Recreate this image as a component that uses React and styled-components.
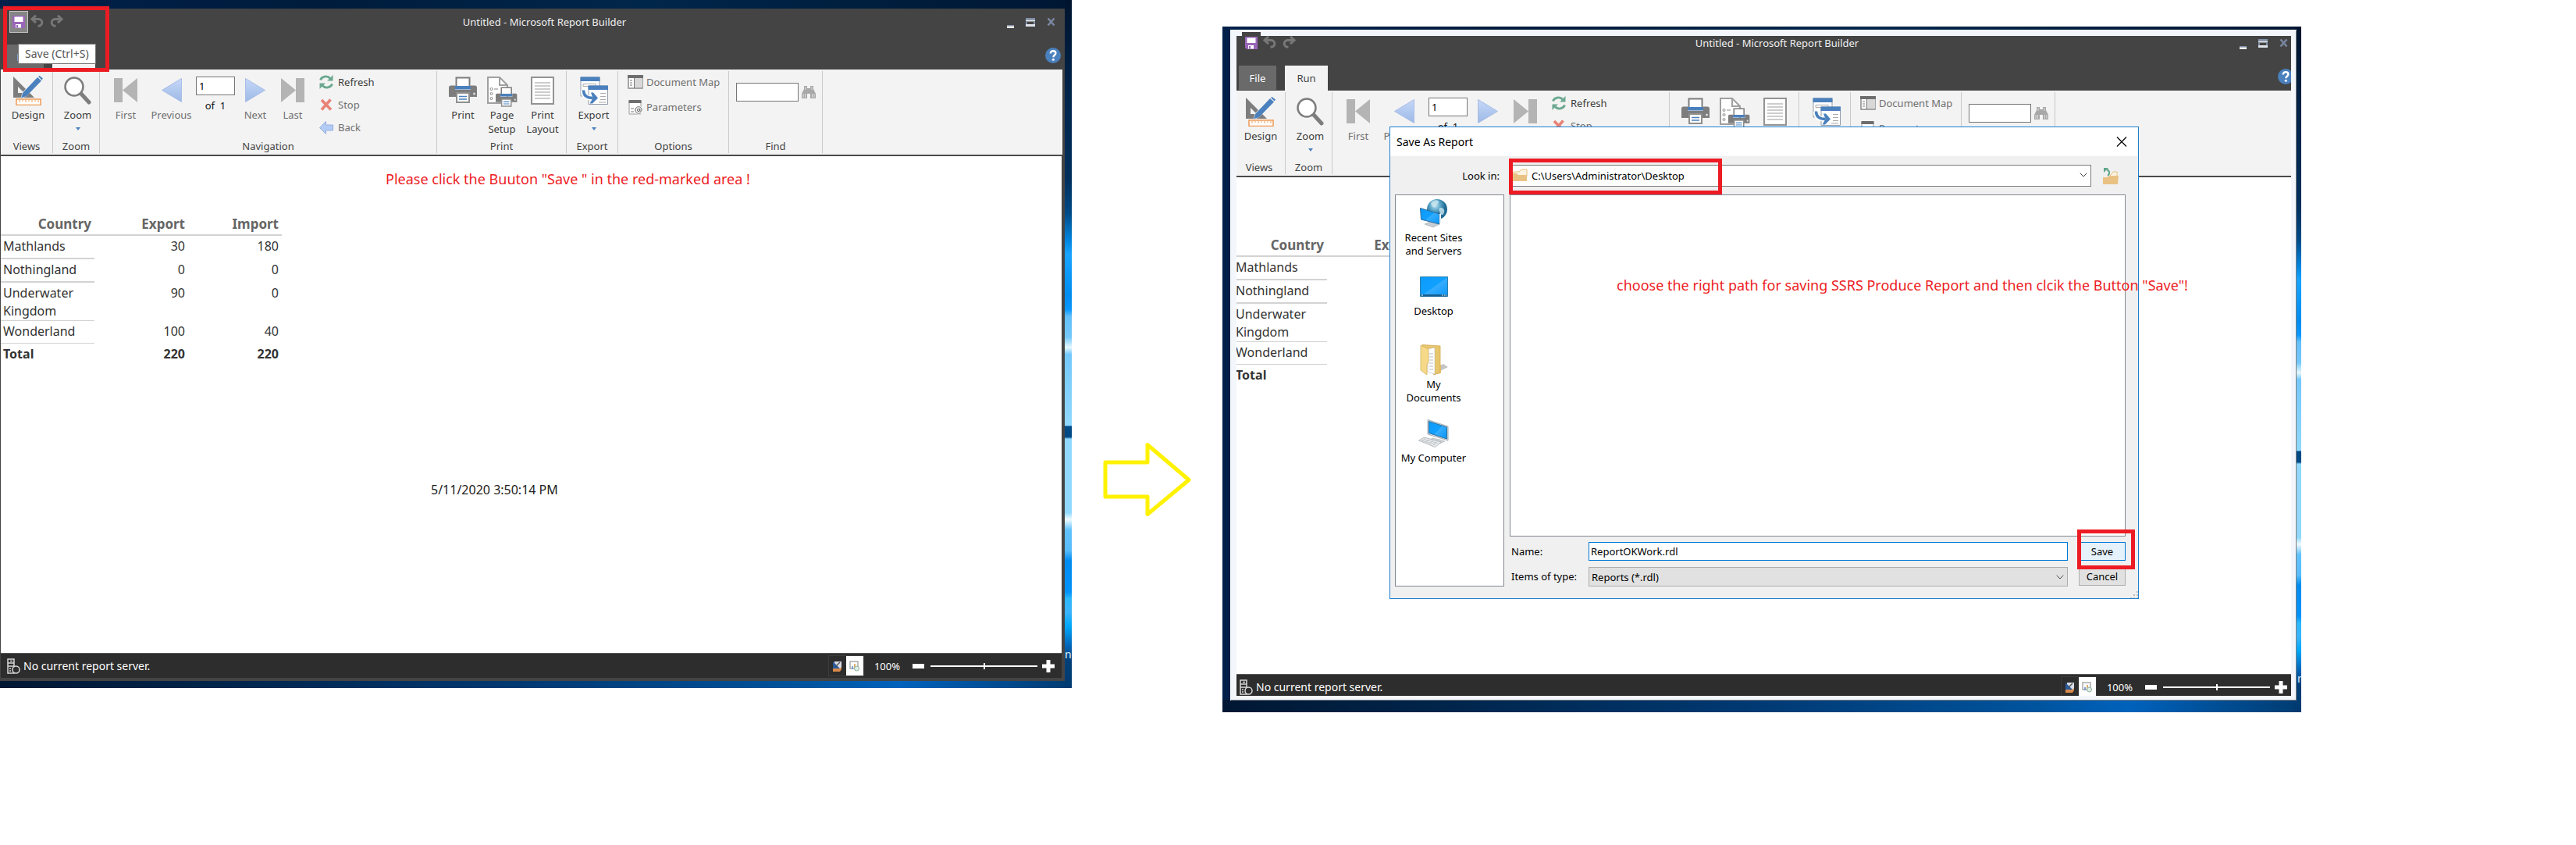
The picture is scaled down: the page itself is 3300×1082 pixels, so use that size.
import React, { useId } from 'react';
import styled, { createGlobalStyle, css } from 'styled-components';

const GlobalStyle = createGlobalStyle`
  *, *::before, *::after { box-sizing: border-box; }
  body { margin: 0; background: #fff; }
  body, button, input, select, table {
    font-family: 'Noto Sans', 'Open Sans', sans-serif;
    font-size: 13px;
    line-height: 18px;
  }
  button { margin: 0; padding: 0; border: 0; background: none; color: inherit; }
  svg { display: block; flex: none; }
`;

const RED = '#ed1c24';

/* ---------- page ---------- */

const Page = styled.main`
  display: grid;
  grid-template-columns: 1373fr 193fr 1382fr 352fr;
  align-items: start;
`;

const Desktop = styled.section`
  position: relative;
  min-width: 0;
  overflow: hidden;
  background:
    linear-gradient(180deg,
      #00142e 0, #00264d 15%, #002f5c 26%, #004a86 31%, #0086e0 35%, #18a4ff 37%, #008cf0 43%,
      #0a98ff 45%, #64c0fb 46%, #74c8fb 49%, #e6f8ff 50.5%, #74c8fb 51.5%, #90d8fd 61.8%,
      #004a86 62%, #004a86 63.5%, #90d8fd 63.8%, #90d8fd 74.5%, #f0fbff 75.5%, #62c2fd 77%,
      #58bcfc 80%, #008cf0 81.5%, #0092fa 86%, #2cb8fc 87%, #3ab4fb 89%, #00a8fa 91%, #0062b4 94%,
      #003f78 96%, #003a70 100%) right top / 9px 100% no-repeat,
    linear-gradient(90deg, #001733 0, #00244a 20%, #003a74 50%, #00539c 75%, #0062bc 84%, #003b70 100%)
      left bottom / 100% 16px no-repeat,
    linear-gradient(90deg, #00204a 0, #001c3c 30%, #00264a 60%, #001733 100%);
`;

const FirstDesktop = styled(Desktop)`
  padding: 11px 9px 9px 0;
`;

const SecondDesktop = styled(Desktop)`
  margin-top: 34px;
  padding: 4px 6px 15px 10px;
`;

const DesktopLabel = styled.span`
  position: absolute;
  right: 0;
  bottom: 34px;
  width: ${(p) => p.$width}px;
  overflow: hidden;
  white-space: nowrap;
  font-size: 14px;
  color: #dfeaf5;
`;

const Between = styled.div`
  display: flex;
  justify-content: center;
  padding-top: 566px;
`;

const Note = styled.p`
  position: absolute;
  z-index: 3;
  left: ${(p) => p.$left}px;
  top: ${(p) => p.$top}px;
  margin: 0;
  font-size: 18px;
  line-height: 24px;
  white-space: nowrap;
  color: ${RED};
`;

const Marker = styled.div`
  position: absolute;
  z-index: 3;
  border: 5px solid ${RED};
  pointer-events: none;
`;

const ToolbarMarker = styled(Marker)`
  left: 4px;
  top: 8px;
  width: 136px;
  height: 84px;
`;

const PathMarker = styled(Marker)`
  left: 0;
  top: -8px;
  width: 273px;
  height: 46px;
`;

const SaveMarker = styled(Marker)`
  inset: -16px -12px -11px -2px;
`;

/* ---------- application window ---------- */

const WindowFrame = styled.div`
  display: flex;
  flex-direction: column;
  background: #444;
  padding-bottom: 4px;
`;

const LightFrame = styled.div`
  position: relative;
  padding: 8px 7px 6px 8px;
  background: #f3f7fc;
  box-shadow: inset 1px 1px 0 #fff, inset -1px -1px 0 #7d8083;
`;

const Clip = styled.div`
  overflow: hidden;

  & > * { margin: -8px -8px -8px -5px; }
`;

const Notch = styled.div`
  position: absolute;
  left: 15px;
  top: 3px;
  width: 24px;
  height: 5px;
  background: #444;
`;

const TitleBar = styled.header`
  display: flex;
  height: 46px;
  padding-top: 3px;
`;

const QuickAccess = styled.div`
  display: flex;
  align-items: flex-start;
  gap: 3px;
  width: 105px;
  padding-left: 12px;
`;

const SaveTool = styled.button`
  padding: ${(p) => (p.$hot ? '5px 3px' : '6px 4px')};
  ${(p) => p.$hot && css`
    border: 1px solid #c4c4c4;
    background: #858585;
  `}
`;

const PlainTool = styled.button`
  padding-top: 5px;

  & + & { margin-left: 3px; }
`;

const WindowTitle = styled.h1`
  flex: 1;
  margin: 0;
  padding-top: 5px;
  font-size: 13px;
  line-height: 18px;
  font-weight: 400;
  text-align: center;
  color: #f0f0f0;
`;

const WindowControls = styled.div`
  display: flex;
  align-items: flex-start;
  gap: 15px;
  width: 74px;
  padding-top: 9px;
`;

const TabBar = styled.nav`
  display: flex;
  align-items: flex-start;
  height: 32px;
  padding-left: 8px;
`;

const Tab = styled.button`
  width: ${(p) => (p.$active ? 55 : 48)}px;
  height: ${(p) => (p.$active ? 32 : 31)}px;
  margin-right: 11px;
  background: ${(p) => (p.$active ? '#f3f3f3' : '#6a6a6a')};
  color: ${(p) => (p.$active ? '#444' : '#fff')};
`;

const HelpButton = styled.button`
  margin: 4px 5px 0 auto;
`;

const Tooltip = styled.div`
  position: absolute;
  z-index: 2;
  left: 23px;
  top: 56px;
  padding: 3px 8px;
  border: 1px solid #767676;
  background: #fff;
  font-size: 14px;
  color: #575757;
`;

const Ribbon = styled.div`
  display: flex;
  height: 111px;
  margin: 0 3px 0 1px;
  padding: 0;
  background: #f3f3f3;
  border-bottom: 2px solid #4a4a4a;
`;

const Group = styled.section`
  position: relative;
  display: flex;
  flex-direction: column;
  justify-content: space-between;
  flex: 0 0 ${(p) => p.$width}px;
  margin: 2px 0;
  border-right: 1px solid #c9c9c9;
`;

const GroupTitle = styled.h2`
  margin: 0;
  font-size: 13px;
  line-height: 18px;
  font-weight: 400;
  text-align: center;
  color: #444;
`;

const Single = styled.div`
  display: flex;
  justify-content: center;
  padding-left: 4px;
`;

const NavigationTools = styled.div`
  display: grid;
  grid-template-columns: 66px 51px 62px 40px 56px 1fr;
`;

const PrintTools = styled.div`
  display: grid;
  grid-template-columns: 50px 50px 54px;
  padding-left: 8px;
`;

const BigTool = styled.button`
  display: flex;
  flex-direction: column;
  align-items: center;
  align-self: start;
  padding-top: 6px;
  color: ${(p) => (p.$muted ? '#707070' : '#3c3c3c')};
`;

const IconSlot = styled.span`
  display: flex;
  align-items: flex-start;
  justify-content: center;
  height: 41px;
  min-width: 36px;
`;

const Drop = styled.span`
  margin-top: 7px;
  border: 3px solid transparent;
  border-top: 4px solid #4a80bd;
`;

const PageBox = styled.label`
  display: flex;
  flex-direction: column;
  align-items: center;
  gap: 4px;
  padding-top: 7px;
  white-space: pre;
  color: #111;
`;

const TextBox = styled.input`
  width: ${(p) => p.$width}px;
  height: 24px;
  padding: 0 3px;
  border: 1px solid #767676;
  background: #fff;
  color: #000;
`;

const ToolList = styled.div`
  display: flex;
  flex-direction: column;
  align-items: flex-start;
  gap: ${(p) => p.$gap}px;
  padding: 5px 0 0 ${(p) => p.$indent}px;
`;

const SmallTool = styled.button`
  display: flex;
  align-items: center;
  gap: ${(p) => p.$gap}px;
  height: 18px;
  color: ${(p) => (p.$muted ? '#707070' : '#3c3c3c')};
`;

const FindTools = styled.div`
  display: flex;
  align-items: center;
  gap: 3px;
  padding: 15px 0 0 9px;
`;

/* ---------- report ---------- */

const ReportCanvas = styled.div`
  min-height: 636px;
  margin: 0 4px 0 1px;
  padding-top: 73px;
  background: #fff;
`;

const ReportTable = styled.table`
  border-spacing: 0;
  table-layout: fixed;
  width: 360px;
  font-size: 16px;
  line-height: 23px;
  color: #333;
`;

const HeadCell = styled.th`
  padding: 0 4px;
  border-bottom: 2px solid #d3d3d3;
  font-size: 17px;
  line-height: 27px;
  text-align: right;
  color: #666;
`;

const NameCell = styled.th`
  height: ${(p) => 28 + p.$rule}px;
  padding: 2px 3px 0;
  border-bottom: ${(p) => p.$rule}px solid #d3d3d3;
  font-weight: ${(p) => (p.$total ? 700 : 400)};
  text-align: left;
  vertical-align: top;
`;

const ValueCell = styled.td`
  padding: 2px 4px 0;
  font-weight: ${(p) => (p.$total ? 700 : 400)};
  text-align: right;
  vertical-align: top;
`;

const Timestamp = styled.p`
  margin: 147px 0 0 551px;
  font-size: 16px;
  line-height: 24px;
  color: #222;
`;

const StatusBar = styled.footer`
  display: flex;
  align-items: center;
  height: 32px;
  margin: 0 4px 0 1px;
  padding: 0 9px 0 8px;
  border-top: 1px solid #5a5a5a;
  background: #2d2d2d;
  color: #fff;
`;

const StatusText = styled.span`
  flex: 1;
  padding-left: 4px;
  font-size: 14px;
`;

const ViewSwitch = styled.div`
  display: flex;
  margin-right: 13px;
  border: 1px solid #3c3c3c;
`;

const ViewButton = styled.button`
  display: flex;
  align-items: center;
  justify-content: center;
  width: 22px;
  height: 25px;
  background: ${(p) => (p.$active ? '#fff' : 'transparent')};
`;

const ZoomSlider = styled.input`
  appearance: none;
  width: 137px;
  height: 8px;
  margin: 0 6px 0 8px;
  background: linear-gradient(#fff, #fff) center / 100% 2px no-repeat;

  &::-webkit-slider-thumb {
    appearance: none;
    width: 2px;
    height: 8px;
    background: #fff;
  }
`;

const ZoomOut = styled.button`
  margin-left: 16px;
`;

/* ---------- dialog ---------- */

const Dialog = styled.div`
  position: absolute;
  z-index: 2;
  left: 214px;
  right: 208px;
  top: 128px;
  padding-bottom: 15px;
  border: 1px solid #1c7fd0;
  background: #f0f0f0;
  color: #000;
`;

const DialogHeader = styled.header`
  display: flex;
  align-items: center;
  justify-content: space-between;
  height: 37px;
  padding: 0 14px 0 8px;
  background: #fff;
`;

const DialogTitle = styled.h2`
  margin: 0;
  font-size: 14px;
  line-height: 18px;
  font-weight: 400;
`;

const LookInRow = styled.div`
  display: flex;
  align-items: center;
  padding: 11px 25px 10px 0;
`;

const LookInLabel = styled.label`
  width: 152px;
  padding-right: 12px;
  text-align: right;
`;

const SelectWrap = styled.div`
  position: relative;
  flex: 1;
  display: flex;

  & > svg { position: absolute; }
`;

const FolderMark = styled.svg`
  left: 5px;
  top: 5px;
`;

const ChevronMark = styled.svg`
  right: 5px;
  top: 10px;
`;

const Select = styled.select`
  appearance: none;
  flex: 1;
  height: ${(p) => (p.$path ? 28 : 25)}px;
  padding: 0 24px 0 ${(p) => (p.$path ? 28 : 3)}px;
  border: 1px solid ${(p) => (p.$path ? '#7a7a7a' : '#adadad')};
  border-radius: 0;
  background: ${(p) => (p.$path ? '#fff' : '#e1e1e1')};
  color: #000;
`;

const UpButton = styled.button`
  margin-left: 15px;
`;

const DialogBody = styled.div`
  display: flex;
  gap: 7px;
  padding: 0 16px 0 6px;
`;

const Places = styled.nav`
  width: 140px;
  border: 1px solid #828790;
  background: #fff;
`;

const Place = styled.button`
  display: flex;
  flex-direction: column;
  align-items: center;
  gap: 3px;
  width: 97px;
  height: 94px;
  padding-top: 3px;
  line-height: 17px;
`;

const PlaceIcon = styled.span`
  display: flex;
  align-items: center;
  justify-content: center;
  height: 40px;
`;

const PlaceName = styled.span`
  max-width: ${(p) => (p.$narrow ? 74 : 90)}px;
  text-align: center;
`;

const DialogMain = styled.div`
  flex: 1;
  display: flex;
  flex-direction: column;
`;

const FileList = styled.div`
  height: 438px;
  border: 1px solid #828790;
  background: #fff;
`;

const Form = styled.form`
  display: grid;
  grid-template-columns: 101px 1fr 60px;
  row-gap: 8px;
  align-items: start;
  margin-top: 7px;
`;

const FieldLabel = styled.label`
  padding: 3px 0 0 2px;
`;

const NameInput = styled.input`
  height: 24px;
  padding: 0 2px;
  border: 1px solid #0078d7;
  background: #fff;
  color: #000;
`;

const ButtonCell = styled.div`
  position: relative;
  display: flex;
`;

const DialogButton = styled.button`
  flex: 1;
  height: 24px;
  border: 1px solid ${(p) => (p.$primary ? '#0078d7' : '#adadad')};
  background: ${(p) => (p.$primary ? '#e5f1fb' : '#e1e1e1')};
`;

const FieldSlot = styled.div`
  display: flex;
  margin-right: 14px;

  & > * { flex: 1; min-width: 0; }
`;

const Grip = styled.svg`
  position: absolute;
  right: 0;
  bottom: 0;
`;

/* ---------- icons ---------- */

const GREY = '#7d7d7d';
const BLUE = '#4a80bd';

const SaveIcon = () => (
  <svg width="16" height="16" viewBox="0 0 16 16">
    <path d="M0 0h16v16H2l-2-2z" fill="#9a66b9" />
    <path d="M2.500 1.500h11V8h-11zM4 11h7v4.500H4z" fill="#fff" />
    <path d="M5 12h2v3.500H5z" fill="#9a66b9" />
  </svg>
);

const UndoIcon = ({ redo }) => (
  <svg width="18" height="17" viewBox="0 0 18 17">
    <g transform={redo ? 'translate(18 0) scale(-1 1)' : undefined} fill="none" stroke="#777" strokeWidth="3">
      <path d="M2 5.500h8.500a4.300 4.300 0 0 1 0 8.700H9.500" />
      <path d="M7 0.800L2 5.500l5 4.700" />
    </g>
  </svg>
);

const MinimizeIcon = () => (
  <svg width="9" height="13" viewBox="0 0 9 13"><path d="M0 9h9v1.500H0z" fill="#8090ab" /><path d="M0 10.500h9V13H0z" fill="#fff" /></svg>
);
const RestoreIcon = () => (
  <svg width="12" height="11" viewBox="0 0 12 11">
    <path d="M0 0h12v2.500H0z" fill="#8090ab" />
    <path d="M0 2.500h12v2H0zM0 8h12v3H0z" fill="#dfe3ea" />
    <path d="M0 4.500h2V8H0zM10 4.500h2V8h-2z" fill="#8090ab" />
  </svg>
);
const CloseIcon = () => (
  <svg width="11" height="10" viewBox="0 0 11 10"><path d="M1.500 0.500l8 9M9.500 0.500l-8 9" stroke="#7986a0" strokeWidth="2.500" /></svg>
);

const HelpIcon = () => (
  <svg width="20" height="20" viewBox="0 0 20 20">
    <circle cx="10" cy="10" r="10" fill={BLUE} />
    <path d="M6.800 7.400C6.800 5.400 8 4.300 10 4.300s3.400 1.100 3.400 2.900c0 2.200-3 2.400-3 5" fill="none" stroke="#fff" strokeWidth="2.400" />
    <circle cx="10.300" cy="15.300" r="1.500" fill="#fff" />
  </svg>
);

const DesignIcon = () => (
  <svg width="40" height="38" viewBox="0 0 40 38">
    <path d="M1 1v27h27z" fill={GREY} />
    <path d="M7 14v8h8z" fill="#f3f3f3" />
    <path d="M10 30l3-9L33 0.500 38.500 5 18 26z" fill="#f3f3f3" />
    <path d="M11 28.500l2.500-7L32 2l5 4.500-19 19.500z" fill={BLUE} />
    <path d="M33 1l1.500-1L39 3.500 37.500 5.500z" fill={BLUE} />
    <path d="M5 30h31v7.500H5z" fill="#fff" stroke="#ee9a55" strokeWidth="1.500" />
    <path d="M9 31v3M13 31v2M17 31v3M21 31v2M25 31v3M29 31v2M33 31v3" stroke="#ee9a55" />
  </svg>
);

const ZoomIcon = () => (
  <svg width="35" height="37" viewBox="0 0 35 37">
    <path d="M21 22l11 12" stroke={GREY} strokeWidth="5" strokeLinecap="round" />
    <circle cx="13" cy="14" r="11.500" fill="#fff" stroke={GREY} strokeWidth="2.500" />
  </svg>
);

const EdgeIcon = ({ last }) => (
  <svg width="30" height="36" viewBox="0 0 30 36">
    <g transform={last ? 'translate(30 0) scale(-1 1)' : undefined} fill="#b4b4b4">
      <path d="M0 3h11v31H0z" /><path d="M30 3v31L11 18.500z" />
    </g>
  </svg>
);

const StepIcon = ({ next }) => {
  const id = useId();
  return (
    <svg width="26" height="36" viewBox="0 0 26 36">
      <defs><linearGradient id={id} x1="0" y1="0" x2="0" y2="1"><stop offset="0" stopColor="#c6d8f8" /><stop offset="1" stopColor="#9db9e6" /></linearGradient></defs>
      <path d="M25.500 3.500v30L0.500 18.500z" transform={next ? 'translate(26 0) scale(-1 1)' : undefined} fill={`url(#${id})`} stroke="#a9bde6" />
    </svg>
  );
};

const RefreshIcon = () => (
  <svg width="18" height="18" viewBox="0 0 18 18" fill="none" stroke="#6aa890" strokeWidth="2.800">
    <path d="M1.500 6.500C3 2 10 0 14 4.500M16.500 11.500C15 16 8 18 4 13.500" />
    <path d="M17.500 0v7.500H10l2.700-2.500M0.500 18v-7.500H8L5.300 13" fill="#6aa890" stroke="none" />
  </svg>
);
const StopIcon = () => (
  <svg width="18" height="18" viewBox="0 0 18 18"><path d="M3 3l12 12.500M14.500 2.500L3 15.500" stroke="#e98377" strokeWidth="3.600" /></svg>
);
const BackIcon = () => (
  <svg width="18" height="18" viewBox="0 0 18 18"><path d="M0.500 9.500L8.500 1.500v4.500h9v7h-9v4.500z" fill="#b3ccf5" stroke="#93aedd" /></svg>
);

const PrinterShape = () => (
  <>
    <path d="M9.500 1.500h17V13h-17z" fill="#fff" stroke={GREY} strokeWidth="2" />
    <path d="M0 14c0-1.500 1-2.500 2.500-2.500H8V17h20v-5.500h5.500c1.500 0 2.500 1 2.500 2.500v12H0z" fill={GREY} />
    <path d="M8 12h20v4.500H8z" fill={BLUE} />
    <path d="M10 21h16v12H10z" fill="#fff" stroke="#8f8f8f" strokeWidth="2" />
    <path d="M13 25.500h10M13 29h10" stroke={BLUE} strokeWidth="1.500" />
    <circle cx="32.500" cy="22" r="1.500" fill="#ddd" />
  </>
);
const PrintIcon = () => (
  <svg width="36" height="36" viewBox="0 -1 36 36"><PrinterShape /></svg>
);
const PageSetupIcon = () => (
  <svg width="40" height="40" viewBox="0 0 40 40">
    <path d="M2 2h15l10 10v23H2z" fill="#fff" stroke="#a0a0a0" strokeWidth="2" />
    <path d="M17 2v10h10" fill="none" stroke="#a0a0a0" strokeWidth="2" />
    <g fill="none" stroke="#888"><circle cx="6.500" cy="17" r="1.500" /><circle cx="6.500" cy="23" r="1.500" /><circle cx="6.500" cy="29" r="1.500" /><path d="M10 17h5" /></g>
    <g transform="translate(12 14) scale(.76)"><PrinterShape /></g>
  </svg>
);
const PrintLayoutIcon = () => (
  <svg width="30" height="37" viewBox="0 0 30 37">
    <path d="M1 2h28v34H1z" fill="#fff" stroke="#939393" strokeWidth="2" />
    <path d="M5 9h20M5 13h20M5 17h20M5 21h20M5 25h20M5 29h20" stroke="#9a9a9a" />
  </svg>
);
const ExportIcon = () => (
  <svg width="36" height="38" viewBox="0 0 36 38">
    <path d="M1 2h24v24H1z" fill="#fff" stroke="#8f9aa8" />
    <path d="M0.500 1.500h25V7h-25z" fill={BLUE} />
    <path d="M4 10.500h16v3H4z" fill="none" stroke="#aaa" />
    <path d="M11 13h24.500v23.500H11z" fill="#fff" stroke="#8f9aa8" />
    <path d="M10.500 12.500H36V18H10.500z" fill={BLUE} />
    <path d="M26 22.500h7M26 26.500h7M26 30.500h7M24 34h9" stroke="#aaa" />
    <path d="M4 19c0 7 4 9.500 11 9.500" fill="none" stroke="#fff" strokeWidth="6" />
    <path d="M4.500 18.500c0 7 4 10 12 10" fill="none" stroke={BLUE} strokeWidth="3.500" />
    <path d="M14 21.500h3l6 7-7 7h-3.500l4-7z" fill={BLUE} />
  </svg>
);
const DocMapIcon = () => (
  <svg width="20" height="18" viewBox="0 0 20 18">
    <path d="M1 1h18v16H1z" fill="#fff" stroke="#8b8b8b" strokeWidth="1.500" />
    <path d="M0 0h20v4H0z" fill="#6e6e6e" /><path d="M9 4h10v12H9z" fill="#d8d8d8" /><path d="M8.500 4v13M3 7h3M3 10h3M3 13h3" stroke="#777" />
  </svg>
);
const ParametersIcon = () => (
  <svg width="20" height="19" viewBox="0 0 20 19">
    <path d="M2 1h15v17H2z" fill="#fff" stroke="#999" />
    <path d="M1.500 0h16v4h-16z" fill="#6e6e6e" /><path d="M4 11h4M4 15h4" stroke="#777" />
    <circle cx="14" cy="13" r="5.500" fill="#f3f3f3" /><circle cx="14" cy="13" r="1.600" fill="none" stroke="#666" />
    <path d="M15.800 11v3c.3 1.500 2.200.6 2.200-1.200 0-5.500-8-5.500-8 .2 0 4 4 5 6.500 3.600" fill="none" stroke="#666" />
  </svg>
);
const FindIcon = () => (
  <svg width="20" height="18" viewBox="0 0 20 18" fill="#a8a8a8">
    <path d="M4 1h4v3h4V1h4v4l3 6v6h-7v-6H8v6H1v-6l3-6z" />
    <path d="M3 11v5M5.500 11v5M14.500 11v5M17 11v5M6 2v4M14 2v4" stroke="#e0e0e0" />
  </svg>
);

const ServerIcon = () => (
  <svg width="17" height="20" viewBox="0 0 17 20" fill="none" stroke="#d8d8d8" strokeWidth="1.500">
    <path d="M1 1h8v18H1zM1 6h8M1 10h8" /><path d="M4 3.500h3M3 13h2M3 16h2" />
    <circle cx="11.500" cy="14.500" r="4.500" fill="#2d2d2d" />
  </svg>
);
const DesignViewIcon = () => (
  <svg width="12" height="14" viewBox="0 0 12 14">
    <path d="M2 1h9v9H2z" fill="#d8dde6" /><path d="M0 1v9h9z" fill="#2c5a99" /><path d="M4 7l5-5" stroke="#555" strokeWidth="1.500" /><path d="M0 10h9l2-2v3l-2 3H0z" fill="#d98a4a" />
  </svg>
);
const RunViewIcon = () => (
  <svg width="13" height="14" viewBox="0 0 13 14">
    <path d="M1 1h10v9H1z" fill="#fdfdfd" stroke="#aaa" strokeWidth="1.500" /><path d="M3 7h2v4H3z" fill="#7d9fd0" /><path d="M6 4h2v6H6z" fill="#e0b070" />
    <circle cx="9.500" cy="10" r="3" fill="#dfeee6" stroke="#8ab09c" />
  </svg>
);
const MinusIcon = () => (
  <svg width="15" height="6" viewBox="0 0 15 6"><path d="M0 0h15v6H0z" fill="#fff" /></svg>
);
const PlusIcon = () => (
  <svg width="16" height="16" viewBox="0 0 16 16"><path d="M5.500 0h5v5.500H16v5h-5.500V16h-5v-5.500H0v-5h5.500z" fill="#fff" /></svg>
);

const FolderShape = () => (
  <>
    <path d="M1 4h7l3-3h7v9H1z" fill="#fbf3e3" stroke="#e8c07c" />
    <path d="M0 16V6h5l2 2h11v8z" fill="#e9c283" />
  </>
);
const UpFolderIcon = () => (
  <svg width="20" height="21" viewBox="0 0 20 21">
    <path d="M9 10l4-5h5v6" fill="#fbf3e3" stroke="#e8c07c" />
    <path d="M0 21v-9h5l4-2h11l-1 11z" fill="#e9c283" />
    <path d="M6 10c3-2 3-6-1-8" fill="none" stroke="#5fa58a" strokeWidth="2" /><path d="M1 0h6L1 6z" fill="#5fa58a" />
  </svg>
);
const DialogCloseIcon = () => (
  <svg width="14" height="13" viewBox="0 0 14 13"><path d="M1 0.500l12 12M13 0.500l-12 12" stroke="#000" strokeWidth="1.200" /></svg>
);

const Blue = ({ id }) => (
  <linearGradient id={id} x1="0" y1="0" x2="1" y2="1"><stop offset="0" stopColor="#0c9bfb" /><stop offset=".5" stopColor="#12a0ff" /><stop offset=".52" stopColor="#35adff" /><stop offset="1" stopColor="#0b97f8" /></linearGradient>
);
const RecentIcon = () => {
  const id = useId();
  return (
    <svg width="36" height="38" viewBox="0 0 36 38">
      <defs><Blue id={id} /><radialGradient id={id + 'g'} cx=".4" cy=".3"><stop offset="0" stopColor="#cfeaf5" /><stop offset=".5" stopColor="#5fa9cb" /><stop offset="1" stopColor="#1f6b94" /></radialGradient></defs>
      <circle cx="22" cy="14" r="13" fill={`url(#${id}g)`} />
      <path d="M14 6c4-5 9-4 10-2s-3 3-4 6-5 1-6-4zM26 12c4 0 6 2 5 6s-4 4-5 1-3-6 0-7z" fill="#c9e6ee" opacity=".8" />
      <path d="M6 33l7-3 12 3-8 4z" fill="#c8ced3" stroke="#9aa2a8" strokeWidth=".6" />
      <path d="M0.500 12.500L25 20v13L1.500 27z" fill={`url(#${id})`} stroke="#2b6c9b" />
      <path d="M25 20l2-1v12l-2 2z" fill="#e8eef2" />
    </svg>
  );
};
const DesktopIcon = () => {
  const id = useId();
  return (
    <svg width="36" height="26" viewBox="0 0 36 26">
      <defs><Blue id={id} /></defs>
      <path d="M0.500 0.500h35v25h-35z" fill={`url(#${id})`} stroke="#2a7fae" />
      <path d="M1 23h34v2.500H1z" fill="#17608f" /><path d="M2 24h2M28 24h1.500M31 24h1.500M33.500 24h1" stroke="#fff" />
    </svg>
  );
};
const DocumentsIcon = () => (
  <svg width="36" height="40" viewBox="0 0 36 40">
    <path d="M22 36l14-7-6-4-8 4z" fill="#c4c4c4" /><path d="M22 24l5 2v11l-5 1z" fill="#e9cd7a" />
    <path d="M3 0.500L26 2v34l-8 3z" fill="#e8c66d" stroke="#d1aa4d" strokeWidth=".8" />
    <path d="M10 6l9-2v34l-9-3z" fill="#fff" stroke="#bbb" strokeWidth=".6" />
    <path d="M12 12h5M12 16h5M12 20h5M12 24h5M12 28h5M12 32h5" stroke="#b9bcc0" />
    <path d="M1 1l10 5v17l-2 3v13L1 33z" fill="#f6d989" stroke="#d6b158" strokeWidth=".8" />
  </svg>
);
const ComputerIcon = () => {
  const id = useId();
  return (
    <svg width="40" height="36" viewBox="0 0 40 36">
      <defs><Blue id={id} /></defs>
      <path d="M17 24l11 2 6 2-7 3-10-4z" fill="#d3d7da" stroke="#a8adb1" strokeWidth=".6" />
      <path d="M12 0.500L38 9v18L12 19z" fill="#dfe6ea" stroke="#8b98a2" strokeWidth=".8" />
      <path d="M13.500 2.500L36.500 10v15L13.500 17.500z" fill={`url(#${id})`} stroke="#2c6f9d" />
      <path d="M0.500 27l7-4 22 6-8 6.500z" fill="#e9ecee" stroke="#a3a8ac" strokeWidth=".8" />
      <path d="M4 27l18 5.500M7 25.500l18 5M9 24l-5 4M14 25.500l-5 4M19 27l-5 4M24 28.500l-5 4" stroke="#b8bdc1" strokeWidth=".8" />
    </svg>
  );
};

const Arrow = () => (
  <svg width="113" height="96" viewBox="0 0 113 96">
    <path d="M3 26h54V3.500l53 45L57 92.500V70H3z" fill="none" stroke="#fff200" strokeWidth="5" strokeLinejoin="round" />
  </svg>
);

const Chevron = () => (
  <ChevronMark width="10" height="6" viewBox="0 0 10 6"><path d="M0.700 0.700L5 5l4.300-4.300" fill="none" stroke="#444" /></ChevronMark>
);

/* ---------- parts ---------- */

const Big = ({ icon, label, muted, drop }) => (
  <BigTool type="button" $muted={muted}>
    <IconSlot>{icon}</IconSlot>
    <span>{label}</span>
    {drop && <Drop />}
  </BigTool>
);

const rows = [
  { name: 'Mathlands', values: [30, 180], rule: 2 },
  { name: 'Nothingland', values: [0, 0], rule: 2 },
  { name: 'Underwater Kingdom', values: [90, 0], rule: 1 },
  { name: 'Wonderland', values: [100, 40], rule: 1 },
  { name: 'Total', values: [220, 220], rule: 0, total: true },
];

function Report() {
  return (
    <ReportCanvas>
      <ReportTable>
        <thead>
          <tr>
            {['Country', 'Export', 'Import'].map((h) => <HeadCell key={h} scope="col">{h}</HeadCell>)}
          </tr>
        </thead>
        <tbody>
          {rows.map((r) => (
            <tr key={r.name}>
              <NameCell scope="row" $rule={r.rule} $total={r.total}>{r.name}</NameCell>
              {r.values.map((v, i) => <ValueCell key={i} $total={r.total}>{v}</ValueCell>)}
            </tr>
          ))}
        </tbody>
      </ReportTable>
      <Timestamp>5/11/2020 3:50:14 PM</Timestamp>
    </ReportCanvas>
  );
}

function RibbonBar() {
  return (
    <Ribbon>
      <Group $width={67}>
        <Single><Big icon={<DesignIcon />} label="Design" /></Single>
        <GroupTitle>Views</GroupTitle>
      </Group>
      <Group $width={60}>
        <Single><Big icon={<ZoomIcon />} label="Zoom" drop /></Single>
        <GroupTitle>Zoom</GroupTitle>
      </Group>
      <Group $width={432}>
        <NavigationTools>
          <Big icon={<EdgeIcon />} label="First" muted />
          <Big icon={<StepIcon />} label="Previous" muted />
          <PageBox>
            <TextBox $width={50} defaultValue="1" />
            <span>{'of  1'}</span>
          </PageBox>
          <Big icon={<StepIcon next />} label="Next" muted />
          <Big icon={<EdgeIcon last />} label="Last" muted />
          <ToolList $gap={11} $indent={6}>
            <SmallTool type="button" $gap={6}><RefreshIcon />Refresh</SmallTool>
            <SmallTool type="button" $gap={6} $muted><StopIcon />Stop</SmallTool>
            <SmallTool type="button" $gap={6} $muted><BackIcon />Back</SmallTool>
          </ToolList>
        </NavigationTools>
        <GroupTitle>Navigation</GroupTitle>
      </Group>
      <Group $width={166}>
        <PrintTools>
          <Big icon={<PrintIcon />} label="Print" />
          <Big icon={<PageSetupIcon />} label={<>Page<br />Setup</>} />
          <Big icon={<PrintLayoutIcon />} label={<>Print<br />Layout</>} />
        </PrintTools>
        <GroupTitle>Print</GroupTitle>
      </Group>
      <Group $width={66}>
        <Single><Big icon={<ExportIcon />} label="Export" drop /></Single>
        <GroupTitle>Export</GroupTitle>
      </Group>
      <Group $width={142}>
        <ToolList $gap={14} $indent={12}>
          <SmallTool type="button" $gap={4} $muted><DocMapIcon />Document Map</SmallTool>
          <SmallTool type="button" $gap={4} $muted><ParametersIcon />Parameters</SmallTool>
        </ToolList>
        <GroupTitle>Options</GroupTitle>
      </Group>
      <Group $width={120}>
        <FindTools>
          <TextBox $width={80} aria-label="Find" />
          <button type="button" aria-label="Find next"><FindIcon /></button>
        </FindTools>
        <GroupTitle>Find</GroupTitle>
      </Group>
    </Ribbon>
  );
}

function ReportBuilder({ saveHot }) {
  return (
    <WindowFrame>
      <TitleBar>
        <QuickAccess>
          <SaveTool type="button" aria-label="Save" $hot={saveHot}><SaveIcon /></SaveTool>
          <PlainTool type="button" aria-label="Undo"><UndoIcon /></PlainTool>
          <PlainTool type="button" aria-label="Redo"><UndoIcon redo /></PlainTool>
        </QuickAccess>
        <WindowTitle>Untitled - Microsoft Report Builder</WindowTitle>
        <WindowControls>
          <button type="button" aria-label="Minimize"><MinimizeIcon /></button>
          <button type="button" aria-label="Restore"><RestoreIcon /></button>
          <button type="button" aria-label="Close"><CloseIcon /></button>
        </WindowControls>
      </TitleBar>
      <TabBar>
        <Tab type="button">File</Tab>
        <Tab type="button" $active>Run</Tab>
        <HelpButton type="button" aria-label="Help"><HelpIcon /></HelpButton>
      </TabBar>
      <RibbonBar />
      <Report />
      <StatusBar>
        <ServerIcon />
        <StatusText>No current report server.</StatusText>
        <ViewSwitch>
          <ViewButton type="button" aria-label="Design view"><DesignViewIcon /></ViewButton>
          <ViewButton type="button" aria-label="Run view" $active><RunViewIcon /></ViewButton>
        </ViewSwitch>
        <span>100%</span>
        <ZoomOut type="button" aria-label="Zoom out"><MinusIcon /></ZoomOut>
        <ZoomSlider type="range" aria-label="Zoom level" defaultValue="50" />
        <button type="button" aria-label="Zoom in"><PlusIcon /></button>
      </StatusBar>
    </WindowFrame>
  );
}

const places = [
  { name: 'Recent Sites and Servers', icon: <RecentIcon /> },
  { name: 'Desktop', icon: <DesktopIcon /> },
  { name: 'My Documents', icon: <DocumentsIcon />, narrow: true },
  { name: 'My Computer', icon: <ComputerIcon /> },
];

function SaveDialog() {
  return (
    <Dialog role="dialog" aria-labelledby="save-title">
      <DialogHeader>
        <DialogTitle id="save-title">Save As Report</DialogTitle>
        <button type="button" aria-label="Close dialog"><DialogCloseIcon /></button>
      </DialogHeader>
      <LookInRow>
        <LookInLabel htmlFor="look-in">Look in:</LookInLabel>
        <SelectWrap>
          <Select id="look-in" $path><option>C:\Users\Administrator\Desktop</option></Select>
          <FolderMark width="19" height="17" viewBox="0 0 19 17"><FolderShape /></FolderMark>
          <Chevron />
          <PathMarker />
        </SelectWrap>
        <UpButton type="button" aria-label="Up one level"><UpFolderIcon /></UpButton>
      </LookInRow>
      <DialogBody>
        <Places>
          {places.map((p) => (
            <Place key={p.name} type="button">
              <PlaceIcon>{p.icon}</PlaceIcon>
              <PlaceName $narrow={p.narrow}>{p.name}</PlaceName>
            </Place>
          ))}
        </Places>
        <DialogMain>
          <FileList />
          <Form onSubmit={(e) => e.preventDefault()}>
            <FieldLabel htmlFor="file-name">Name:</FieldLabel>
            <FieldSlot><NameInput id="file-name" defaultValue="ReportOKWork.rdl" /></FieldSlot>
            <ButtonCell>
              <DialogButton type="submit" $primary>Save</DialogButton>
              <SaveMarker />
            </ButtonCell>
            <FieldLabel htmlFor="file-type">Items of type:</FieldLabel>
            <FieldSlot>
              <SelectWrap>
                <Select id="file-type"><option>Reports (*.rdl)</option></Select>
                <Chevron />
              </SelectWrap>
            </FieldSlot>
            <ButtonCell><DialogButton type="button">Cancel</DialogButton></ButtonCell>
          </Form>
        </DialogMain>
      </DialogBody>
      <Grip width="10" height="10" viewBox="0 0 10 10"><path d="M8 1h2v2H8zM4 5h2v2H4zM8 5h2v2H8zM0 9h2v1H0zM4 9h2v1H4zM8 9h2v1H8z" fill="#bdbdbd" /></Grip>
    </Dialog>
  );
}

export default function App() {
  return (
    <>
      <GlobalStyle />
      <Page>
        <FirstDesktop>
          <ReportBuilder saveHot />
          <Tooltip role="tooltip">Save (Ctrl+S)</Tooltip>
          <ToolbarMarker />
          <Note $left={494} $top={217}>Please click the Buuton "Save " in the red-marked area !</Note>
          <DesktopLabel $width={9}>nd</DesktopLabel>
        </FirstDesktop>
        <Between><Arrow /></Between>
        <SecondDesktop>
          <LightFrame>
            <Notch />
            <Clip><ReportBuilder /></Clip>
          </LightFrame>
          <SaveDialog />
          <Note $left={505} $top={319}>choose the right path for saving SSRS Produce Report and then clcik the Button "Save"!</Note>
          <DesktopLabel $width={5}>nd</DesktopLabel>
        </SecondDesktop>
      </Page>
    </>
  );
}
